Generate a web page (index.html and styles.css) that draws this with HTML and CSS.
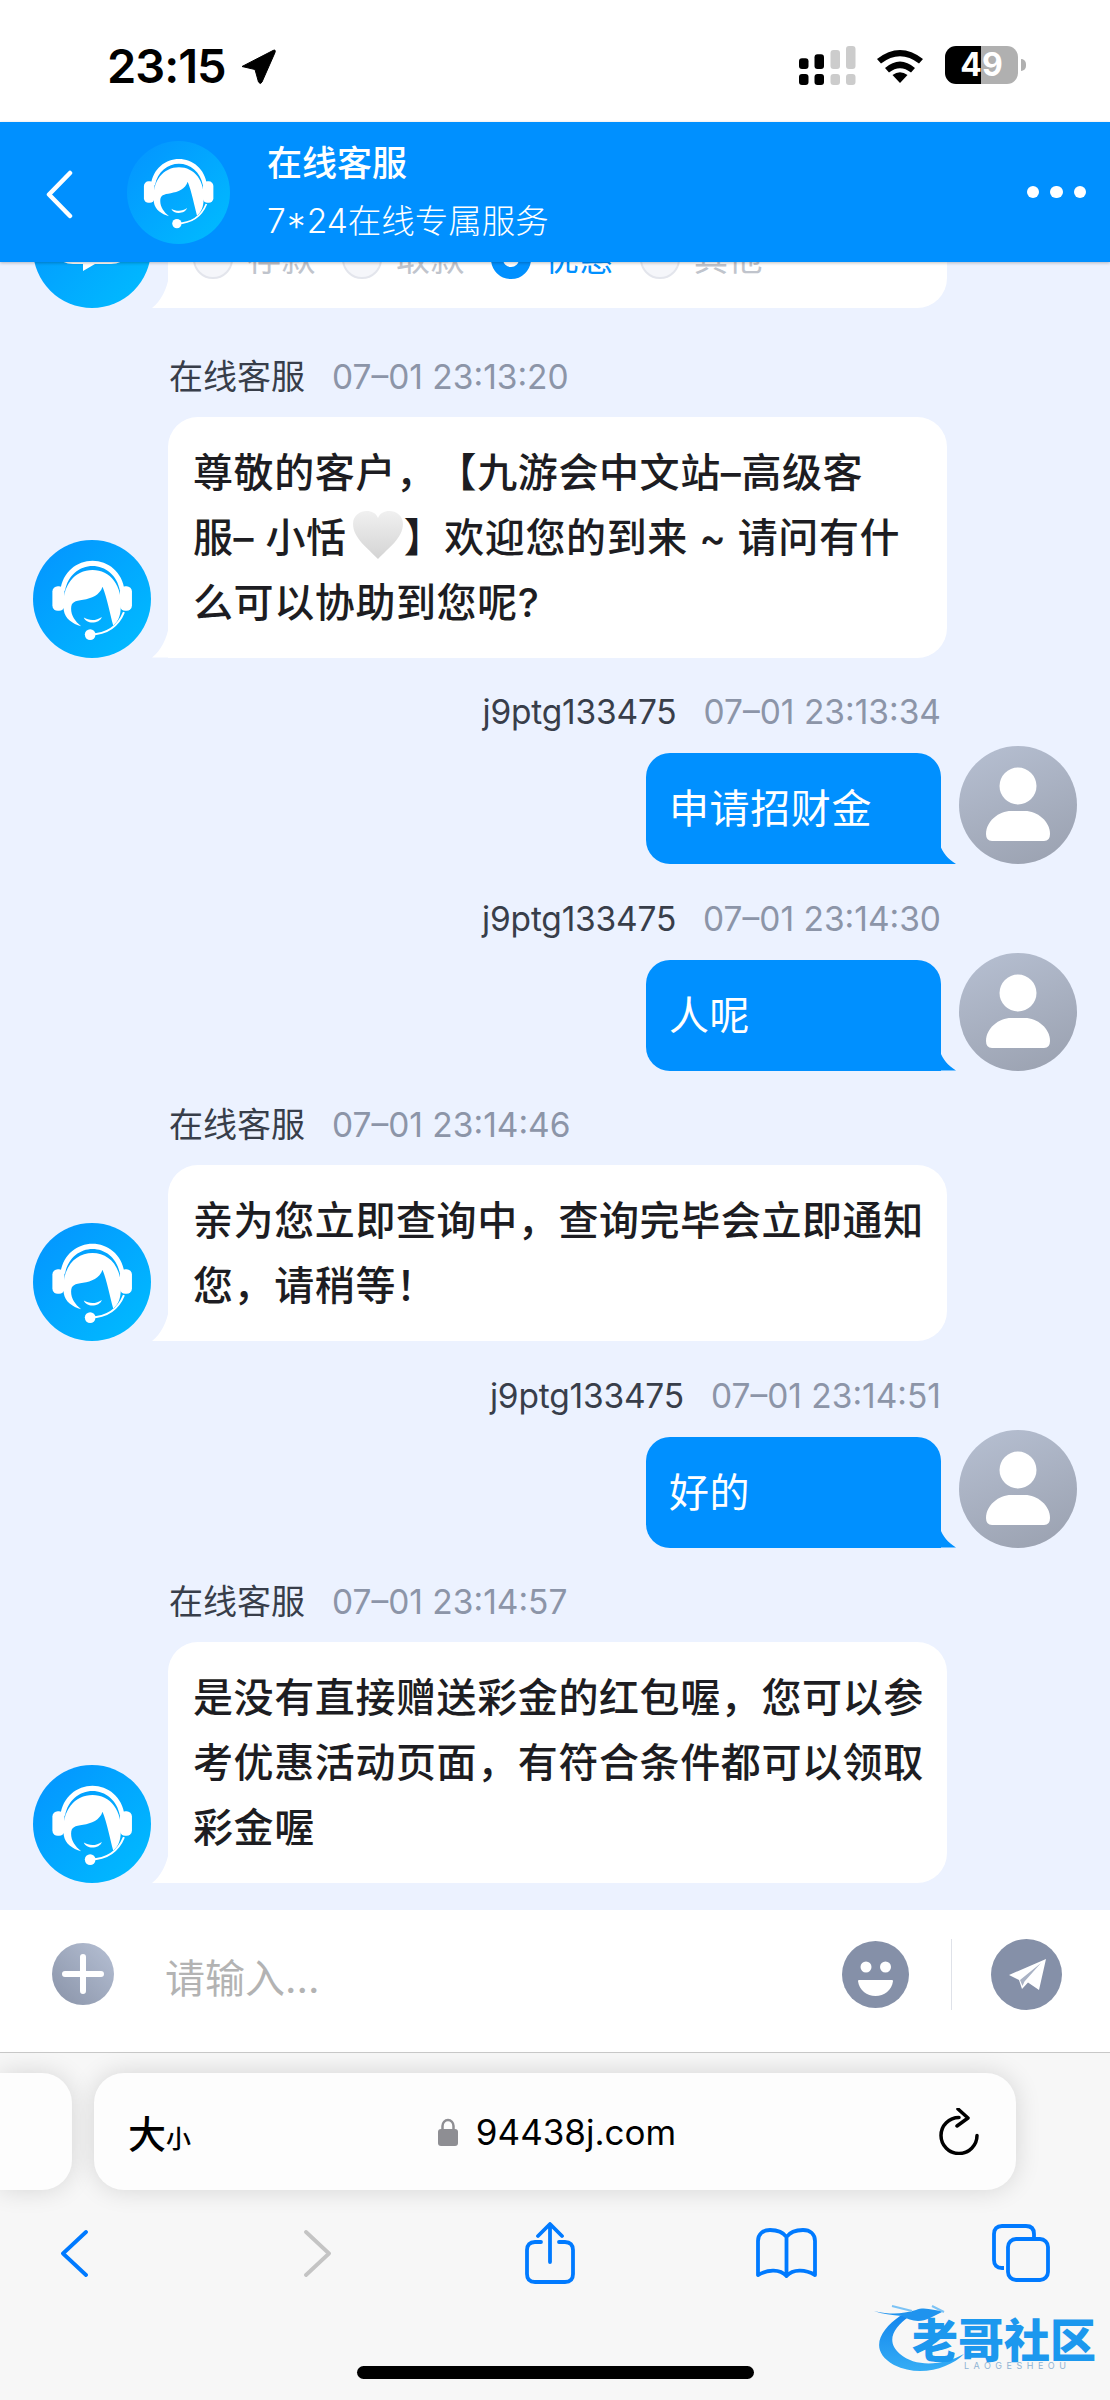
FILE: index.html
```html
<!DOCTYPE html>
<html lang="zh-CN">
<head>
    <meta charset="UTF-8">
    <meta name="viewport" content="width=device-width, initial-scale=1.0">
    <title>在线客服</title>
    <link rel="stylesheet" href="styles.css">
</head>
<body>
    <!-- shared icons -->
    <svg class="icon-defs" width="0" height="0">
        <defs>
            <linearGradient id="blueGrad" x1="0" y1="0" x2="1" y2="1">
                <stop offset="0" stop-color="#0493ff"/>
                <stop offset="1" stop-color="#00bdff"/>
            </linearGradient>
            <linearGradient id="greyGrad" x1="0.3" y1="0" x2="0.7" y2="1">
                <stop offset="0" stop-color="#b4bdcf"/>
                <stop offset="1" stop-color="#9ca3b2"/>
            </linearGradient>
            <linearGradient id="plusGrad" x1="0" y1="1" x2="1" y2="0">
                <stop offset="0" stop-color="#8993a8"/>
                <stop offset="1" stop-color="#b6c0d4"/>
            </linearGradient>
            <linearGradient id="heartGrad" x1="0" y1="0" x2="0" y2="1">
                <stop offset="0" stop-color="#f0f0f0"/>
                <stop offset="1" stop-color="#d4d4d4"/>
            </linearGradient>
            <linearGradient id="markGrad" x1="0" y1="0" x2="0" y2="1">
                <stop offset="0" stop-color="#1487ee"/>
                <stop offset="1" stop-color="#35adf5"/>
            </linearGradient>
            <symbol id="agent" viewBox="40 30 353 353">
                <circle cx="216.5" cy="206.5" r="176.5" fill="url(#blueGrad)"/>
                <path d="M122 182C128 125 172 92 218 92C264 92 308 125 314 182L300 182C292 135 256 108 218 108C180 108 144 135 136 182Z" fill="#fff"/>
                <rect x="98" y="168" width="36" height="74" rx="16" fill="#fff"/>
                <rect x="300" y="168" width="36" height="74" rx="16" fill="#fff"/>
                <path d="M132 240C124 165 166 120 218 120C270 120 310 165 302 240C300 262 292 276 280 286C270 250 262 205 248 170C240 195 215 205 190 209C165 213 154 215 154 236C154 256 166 274 184 288C158 280 136 266 132 240Z" fill="#fff"/>
                <path d="M192 262C208 272 230 272 246 260C240 280 200 284 192 262Z" fill="#fff"/>
                <path d="M212 313C250 312 290 300 312 246" fill="none" stroke="#fff" stroke-width="6"/>
                <circle cx="211" cy="313" r="16" fill="#fff"/>
            </symbol>
            <symbol id="person" viewBox="0 0 118 118">
                <circle cx="59" cy="59" r="59" fill="url(#greyGrad)"/>
                <circle cx="59" cy="40" r="18.5" fill="#fff"/>
                <path d="M27 88C27 75 40 65 52 65H66C78 65 91 75 91 88Q91 95 85 95H33Q27 95 27 88Z" fill="#fff"/>
            </symbol>
        </defs>
    </svg>

    <div class="phone">
        <div class="status-bar">
            <div class="status-left">
                <span class="clock">23:15</span>
                <svg class="loc-arrow" width="36" height="36" viewBox="0 0 36 36">
                    <path d="M2 17.5L33 1.5Q36 0 35 3.5L22 33Q20.500 36 18.500 33L15 20.500Z" fill="#000" stroke="#000" stroke-width="1" stroke-linejoin="round"/>
                </svg>
            </div>
            <div class="status-right">
                <svg class="signal" width="57" height="39" viewBox="0 0 57 39">
                    <rect x="0" y="12.300" width="9.500" height="10.700" rx="3"/>
                    <rect x="15.500" y="8.300" width="9.500" height="14.700" rx="3"/>
                    <rect x="31.500" y="4" width="9.500" height="19" rx="3" fill="#ccc"/>
                    <rect x="47" y="0" width="9.500" height="23" rx="3" fill="#ccc"/>
                    <rect x="0" y="28" width="9.500" height="11" rx="3"/>
                    <rect x="15.500" y="28" width="9.500" height="11" rx="3"/>
                    <rect x="31.500" y="28" width="9.500" height="11" rx="3" fill="#ccc"/>
                    <rect x="47" y="28" width="9.500" height="11" rx="3" fill="#ccc"/>
                </svg>
                <svg class="wifi" width="50" height="37" viewBox="0 0 50 37">
                    <path d="M2 13Q25 -5 48 13L44 17.500Q25 3 6 17.500Z"/>
                    <path d="M10 22Q25 9 40 22L36 26.500Q25 18 14 26.500Z"/>
                    <path d="M25 37L17.500 29Q25 23.500 32.500 29Z"/>
                </svg>
                <div class="battery">49</div>
                <div class="battery-nub"></div>
            </div>
        </div>

        <header class="chat-header">
            <svg class="back-arrow" width="27" height="49" viewBox="0 0 27 49">
                <path d="M24 3L3 24.500L24 46" fill="none" stroke="#fff" stroke-width="4.500" stroke-linecap="round" stroke-linejoin="round"/>
            </svg>
            <svg class="header-avatar" width="103" height="103"><use href="#agent"/></svg>
            <div class="header-text">
                <div class="header-title">在线客服</div>
                <div class="header-sub">7*24在线专属服务</div>
            </div>
            <div class="more-dots"><span></span><span></span><span></span></div>
        </header>

        <main class="chat">
            <div class="msg-row msg-left options-row">
                <svg class="avatar" width="118" height="118" viewBox="0 0 118 118">
                    <circle cx="59" cy="59" r="59" fill="url(#blueGrad)"/>
                    <path d="M40 24H78Q94 24 94 40V58Q94 74 78 74H62L50 81V74H40Q24 74 24 58V40Q24 24 40 24Z" fill="#fff"/>
                    <rect x="35" y="30" width="48" height="32" rx="10" fill="#0aa2ff"/>
                </svg>
                <div class="bubble options">
                    <label class="option"><i class="radio"></i>存款</label>
                    <label class="option"><i class="radio"></i>取款</label>
                    <label class="option is-on"><i class="radio"></i>优惠</label>
                    <label class="option"><i class="radio"></i>其他</label>
                </div>
            </div>

            <div class="msg">
                <div class="meta meta-left"><span class="name">在线客服</span><span class="time">07–01 23:13:20</span></div>
                <div class="msg-row msg-left">
                    <svg class="avatar" width="118" height="118"><use href="#agent"/></svg>
                    <div class="bubble">尊敬的客户，【九游会中文站–高级客<br>服– 小恬<svg class="heart" width="52" height="50" viewBox="0 0 50 50" preserveAspectRatio="none"><path d="M25 49C15 38 1 28 1 14C1 5 8 1 14 1C19 1 23 3 25 8C27 3 31 1 36 1C42 1 49 5 49 14C49 28 35 38 25 49Z" fill="url(#heartGrad)"/></svg>】欢迎您的到来 ~ 请问有什<br>么可以协助到您呢?</div>
                </div>
            </div>

            <div class="msg">
                <div class="meta meta-right"><span class="name">j9ptg133475</span><span class="time">07–01 23:13:34</span></div>
                <div class="msg-row msg-right">
                    <div class="bubble">申请招财金</div>
                    <svg class="avatar" width="118" height="118"><use href="#person"/></svg>
                </div>
            </div>

            <div class="msg">
                <div class="meta meta-right"><span class="name">j9ptg133475</span><span class="time">07–01 23:14:30</span></div>
                <div class="msg-row msg-right">
                    <div class="bubble">人呢</div>
                    <svg class="avatar" width="118" height="118"><use href="#person"/></svg>
                </div>
            </div>

            <div class="msg">
                <div class="meta meta-left"><span class="name">在线客服</span><span class="time">07–01 23:14:46</span></div>
                <div class="msg-row msg-left">
                    <svg class="avatar" width="118" height="118"><use href="#agent"/></svg>
                    <div class="bubble">亲为您立即查询中，查询完毕会立即通知<br>您，请稍等！</div>
                </div>
            </div>

            <div class="msg">
                <div class="meta meta-right"><span class="name">j9ptg133475</span><span class="time">07–01 23:14:51</span></div>
                <div class="msg-row msg-right">
                    <div class="bubble">好的</div>
                    <svg class="avatar" width="118" height="118"><use href="#person"/></svg>
                </div>
            </div>

            <div class="msg">
                <div class="meta meta-left"><span class="name">在线客服</span><span class="time">07–01 23:14:57</span></div>
                <div class="msg-row msg-left">
                    <svg class="avatar" width="118" height="118"><use href="#agent"/></svg>
                    <div class="bubble">是没有直接赠送彩金的红包喔，您可以参<br>考优惠活动页面，有符合条件都可以领取<br>彩金喔</div>
                </div>
            </div>
        </main>

        <div class="input-bar">
            <svg class="btn-plus" width="62" height="62" viewBox="0 0 62 62">
                <circle cx="31" cy="31" r="31" fill="url(#plusGrad)"/>
                <path d="M31 14V48M13 31H49" stroke="#fff" stroke-width="6" stroke-linecap="round"/>
            </svg>
            <div class="placeholder">请输入...</div>
            <svg class="btn-emoji" width="67" height="67" viewBox="0 0 67 67">
                <circle cx="33.500" cy="33.500" r="33.500" fill="#8590a8"/>
                <circle cx="24" cy="26" r="5.500" fill="#fff"/>
                <circle cx="43.500" cy="26" r="5.500" fill="#fff"/>
                <path d="M17 39H50Q51 39 51 40C50 49 42 55 33.500 55C25 55 17 49 16 40Q16 39 17 39Z" fill="#fff"/>
            </svg>
            <div class="input-divider"></div>
            <svg class="btn-send" width="71" height="71" viewBox="0 0 71 71">
                <circle cx="35.500" cy="35.500" r="35.500" fill="#8590a8"/>
                <path d="M55 20L18 36L28 41L31 50L37 43.500L48 51Z" fill="#fff"/>
                <path d="M50 24L29 41L31.500 47L33.500 42.500Z" fill="#aab3c5"/>
            </svg>
        </div>

        <div class="browser">
            <div class="tab-row">
                <div class="tab-prev"></div>
                <div class="url-card">
                    <div class="text-size"><span class="big">大</span><span class="small">小</span></div>
                    <div class="url">
                        <svg class="lock" width="20" height="28" viewBox="0 0 20 28">
                            <path d="M4.500 12V8A5.500 6 0 0 1 15.500 8V12" fill="none" stroke="#8e8e93" stroke-width="2.500"/>
                            <rect x="0" y="11" width="20" height="17" rx="3" fill="#8e8e93"/>
                        </svg>
                        <span>94438j.com</span>
                    </div>
                    <svg class="reload" width="40" height="47" viewBox="0 0 40 47">
                        <path d="M20 9.500A18 18 0 1 0 38 27.500" fill="none" stroke="#000" stroke-width="3.500" stroke-linecap="round"/>
                        <path d="M19 1L29 10L18 18" fill="none" stroke="#000" stroke-width="3.500" stroke-linecap="round" stroke-linejoin="round"/>
                    </svg>
                </div>
            </div>

            <div class="toolbar">
                <svg class="tool tool-back" width="27" height="47" viewBox="0 0 27 47">
                    <path d="M25 2L2 23.500L25 45" fill="none" stroke="#007aff" stroke-width="3.800" stroke-linecap="round" stroke-linejoin="round"/>
                </svg>
                <svg class="tool tool-forward" width="27" height="47" viewBox="0 0 27 47">
                    <path d="M2 2L25 23.500L2 45" fill="none" stroke="#c4c4c4" stroke-width="3.800" stroke-linecap="round" stroke-linejoin="round"/>
                </svg>
                <svg class="tool tool-share" width="50" height="62" viewBox="0 0 50 62">
                    <path d="M16 20H10Q2 20 2 28V52Q2 60 10 60H40Q48 60 48 52V28Q48 20 40 20H34M25 40V3M13 14L25 2L37 14" fill="none" stroke="#007aff" stroke-width="3.800" stroke-linecap="round" stroke-linejoin="round"/>
                </svg>
                <svg class="tool tool-book" width="61" height="50" viewBox="0 0 61 50">
                    <path d="M30.500 48C24 41 12 41 2 47V13C2 6 7 2 14 2C22 2 27 4 30.500 9C34 4 39 2 47 2C54 2 59 6 59 13V47C49 41 37 41 30.500 48ZM30.500 9V48" fill="none" stroke="#007aff" stroke-width="3.800" stroke-linecap="round" stroke-linejoin="round"/>
                </svg>
                <svg class="tool tool-tabs" width="58" height="58" viewBox="0 0 58 58">
                    <path d="M12 44H10Q2 44 2 36V10Q2 2 10 2H34Q42 2 42 10V13" fill="none" stroke="#007aff" stroke-width="3.800"/>
                    <rect x="16" y="15" width="40" height="41" rx="8" fill="none" stroke="#007aff" stroke-width="3.800"/>
                </svg>
            </div>

            <div class="home-bar"></div>

            <div class="watermark">
                <svg class="mark-swoosh" width="221" height="71" viewBox="0 0 221 71">
                    <path d="M28 14C8 28 -4 48 22 63C48 76 78 66 92 52C72 63 44 66 28 52C14 40 20 26 38 14Z" fill="url(#markGrad)"/>
                    <path d="M2 9C20 13 30 12 44 8C54 4 64 10 72 9L58 16C48 21 38 19 30 14C20 13 10 12 2 9Z" fill="#1f93ee"/>
                    <path d="M20 4L40 9M60 4L72 10" stroke="#7cc3f5" stroke-width="2" fill="none"/>
                </svg>
                <div class="mark-title">老哥社区</div>
                <div class="mark-sub">LAOGESHEOU</div>
            </div>
        </div>
    </div>
</body>
</html>
```

FILE: styles.css
```css
* {
    box-sizing: border-box;
}
body {
    margin: 0;
    font-family: "Inter", "Noto Sans CJK SC", sans-serif;
    background-color: #fff;
}
.icon-defs {
    position: absolute;
}
.phone {
    width: 1110px;
    height: 2400px;
    display: flex;
    flex-direction: column;
    overflow: hidden;
}

/* Status bar */
.status-bar {
    height: 122px;
    flex: none;
    display: flex;
    justify-content: space-between;
    padding: 46px 84px 0 107px;
    background-color: #fff;
}
.status-left {
    display: flex;
    align-items: flex-start;
}
.clock {
    font-size: 47px;
    font-weight: 600;
    line-height: 40px;
    letter-spacing: -1px;
    color: #000;
}
.loc-arrow {
    margin: 3px 0 0 14px;
}
.status-right {
    display: flex;
    align-items: flex-start;
}
.signal {
    margin-right: 19px;
}
.wifi {
    margin-right: 20px;
}
.battery {
    width: 73px;
    height: 38px;
    border-radius: 11px;
    background: linear-gradient(90deg, #000 49%, #b0b0b0 49%);
    color: #fff;
    font-size: 32px;
    font-weight: 700;
    line-height: 38px;
    text-align: center;
}
.battery-nub {
    width: 5px;
    height: 12px;
    margin: 13px 0 0 3px;
    border-radius: 0 6px 6px 0;
    background-color: #b0b0b0;
}

/* Blue header */
.chat-header {
    height: 140px;
    flex: none;
    position: relative;
    z-index: 2;
    display: flex;
    align-items: center;
    padding: 0 24px 0 46px;
    background-color: #0090ff;
    box-shadow: 0 1px 3px rgba(0, 0, 0, 0.25);
    color: #fff;
}
.back-arrow {
    margin-top: 4px;
}
.header-avatar {
    margin-left: 54px;
}
.header-text {
    flex: 1;
    margin-left: 37px;
}
.header-title {
    font-size: 35px;
    font-weight: 500;
    line-height: 50px;
}
.header-sub {
    font-size: 33.500px;
    font-weight: 300;
    line-height: 50px;
    margin-top: 8px;
}
.more-dots {
    display: flex;
    gap: 11px;
    margin-right: 0;
}
.more-dots span {
    width: 12.500px;
    height: 12.500px;
    border-radius: 50%;
    background-color: #fff;
}

/* Chat */
.chat {
    flex: 1;
    min-height: 0;
    display: flex;
    flex-direction: column;
    justify-content: flex-end;
    gap: 32.500px;
    padding: 0 33px 27px;
    background-color: #ecf2ff;
    overflow: hidden;
}
.options-row {
    flex: none;
    margin-bottom: 14px;
}
.msg {
    flex: none;
}
.meta {
    display: flex;
    gap: 27px;
    height: 44px;
    margin-bottom: 18px;
    font-size: 33.500px;
    line-height: 44px;
}
.meta-left {
    margin-left: 136px;
}
.meta-left .name {
    font-size: 34px;
}
.meta-right {
    justify-content: flex-end;
    margin-right: 136px;
    margin-bottom: 12px;
}
.meta-right .name {
    letter-spacing: -0.2px;
}
.name {
    color: #383e4a;
}
.time {
    color: #8c95a8;
}
.msg-row {
    display: flex;
    align-items: flex-end;
}
.msg-left {
    justify-content: flex-start;
}
.msg-right {
    justify-content: flex-end;
}
.avatar {
    flex: none;
}
.bubble {
    position: relative;
    font-size: 40px;
    line-height: 65px;
    letter-spacing: 0.6px;
    padding: 23px 25px;
    white-space: nowrap;
    text-spacing-trim: space-all;
}
.msg-left .bubble {
    width: 779px;
    margin-left: 17px;
    border-radius: 30px 30px 30px 0;
    background-color: #fff;
    color: #1d1d22;
    font-weight: 500;
}
.msg-left .bubble::before {
    content: "";
    position: absolute;
    left: -16px;
    bottom: 0;
    width: 17px;
    height: 32px;
    background-color: #fff;
    clip-path: path("M17 0 C15 13 9 25 0 32 L17 32 Z");
}
.msg-right .bubble {
    width: 295px;
    margin-right: 18px;
    padding-left: 23px;
    border-radius: 24px 24px 0 24px;
    background-color: #0090ff;
    color: #fff;
}
.msg-right .bubble::after {
    content: "";
    position: absolute;
    right: -15px;
    bottom: 0;
    width: 16px;
    height: 19px;
    background-color: #0090ff;
    clip-path: path("M0 0 C3 8 8 14 16 19 L0 19 Z");
}
.heart {
    vertical-align: -8px;
    margin-left: 5px;
}

/* Clipped options card above the first message */
.bubble.options {
    display: flex;
    padding: 0 25px 29px;
    height: 120px;
    align-items: flex-end;
    font-size: 34px;
    font-weight: 400;
    line-height: 40px;
}
.option {
    display: flex;
    align-items: center;
    gap: 14px;
    width: 149px;
    color: #c0c4cc;
}
.radio {
    width: 40px;
    height: 40px;
    border-radius: 50%;
    border: 2px solid #e3e5ec;
    background-color: #f5f6fa;
}
.option.is-on {
    color: #0090ff;
}
.option.is-on .radio {
    border: 12px solid #0090ff;
    background-color: #fff;
}

/* Input bar */
.input-bar {
    height: 143px;
    flex: none;
    display: flex;
    align-items: center;
    padding: 0 48px 14px 52px;
    background-color: #fff;
    border-bottom: 1px solid #c8c8c8;
}
.btn-plus {
    flex: none;
}
.placeholder {
    flex: 1;
    margin: 3px 0 0 51px;
    font-size: 40px;
    color: #b3b3b3;
}
.input-divider {
    width: 1px;
    height: 71px;
    margin: 0 39px 0 42px;
    background-color: #dfe2e9;
}

/* Safari chrome */
.browser {
    height: 347px;
    flex: none;
    position: relative;
    background-color: #f7f7f7;
}
.tab-row {
    display: flex;
    gap: 22px;
    padding-top: 20px;
}
.tab-prev {
    width: 72px;
    height: 117px;
    border-radius: 0 30px 30px 0;
    background-color: #fdfdfd;
    box-shadow: 0 0 26px rgba(0, 0, 0, 0.14);
}
.url-card {
    width: 922px;
    height: 117px;
    display: flex;
    align-items: center;
    justify-content: space-between;
    padding: 0 37px 0 34px;
    border-radius: 30px;
    background-color: #fdfdfd;
    box-shadow: 0 0 26px rgba(0, 0, 0, 0.14);
    color: #000;
}
.text-size {
    display: flex;
    align-items: baseline;
    font-weight: 500;
}
.text-size .big {
    font-size: 38px;
}
.text-size .small {
    font-size: 25px;
}
.url {
    display: flex;
    align-items: center;
    gap: 18px;
    font-size: 35px;
    margin-left: -16px;
}
.toolbar {
    display: flex;
    align-items: center;
    height: 62px;
    margin-top: 32px;
    padding-left: 61px;
}
.tool-forward {
    margin-left: 216px;
}
.tool-share {
    margin-left: 194px;
}
.tool-book {
    margin-left: 181px;
}
.tool-tabs {
    margin-left: 175px;
}
.home-bar {
    width: 397px;
    height: 13px;
    margin: 82px 0 0 357px;
    border-radius: 7px;
    background-color: #000;
}

/* Site watermark stamped over the corner */
.watermark {
    position: absolute;
    left: 872px;
    top: 249px;
    width: 221px;
    height: 71px;
}
.mark-swoosh {
    position: absolute;
    left: 0;
    top: 0;
}
.mark-title {
    position: absolute;
    left: 40px;
    top: 18px;
    font-size: 46px;
    font-weight: 900;
    line-height: 40px;
    white-space: nowrap;
    color: #1c98ee;
}
.mark-sub {
    position: absolute;
    left: 92px;
    top: 60px;
    font-size: 9px;
    line-height: 8px;
    letter-spacing: 4.500px;
    color: #8fb4d4;
}
```
